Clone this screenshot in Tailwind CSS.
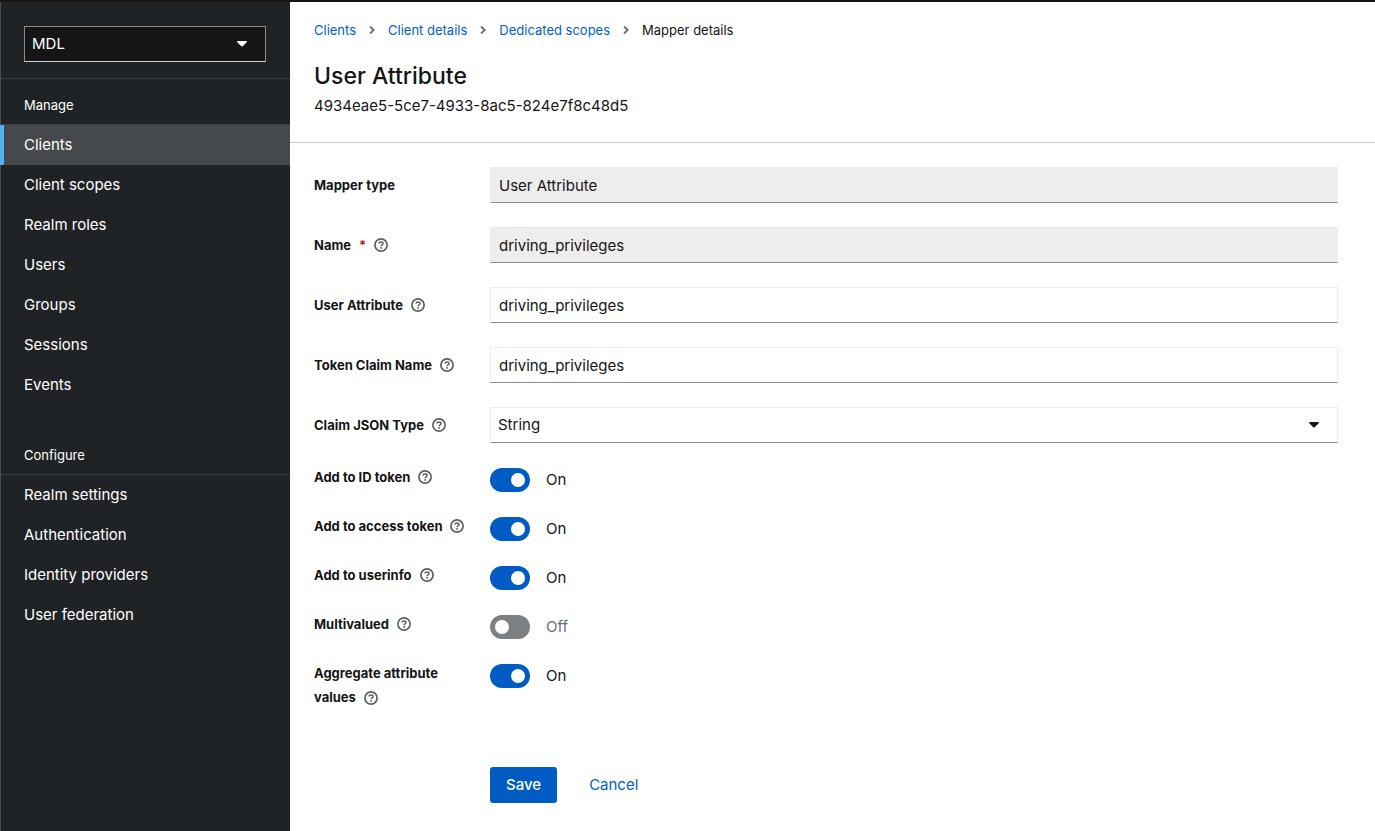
<!DOCTYPE html>
<html lang="en">
<head>
<meta charset="utf-8">
<meta name="viewport" content="width=device-width, initial-scale=1">
<title>Mapper details</title>
<script src="https://cdn.jsdelivr.net/npm/@tailwindcss/browser@4"></script>
</head>
<body class="min-h-screen bg-white font-['Inter',sans-serif] text-[15px] text-[#151515]">
<svg class="hidden" aria-hidden="true">
  <symbol id="help" viewBox="0 0 14 14">
    <circle cx="7" cy="7" r="6.1" fill="none" stroke="currentColor" stroke-width="1.7"/>
    <path d="M4.900 5.500C5.100 4.500 5.900 4 6.900 4c1.200 0 2.100.6 2.100 1.600C9 6.900 7.100 6.700 7.100 8.200" fill="none" stroke="currentColor" stroke-width="1.500"/>
    <circle cx="7.100" cy="9.900" r=".95" fill="currentColor"/>
  </symbol>
  <symbol id="caret" viewBox="0 0 10 6">
    <path d="M.8 0h8.400c.7 0 1 .8.500 1.300L5.700 5.200a1 1 0 0 1-1.400 0L.3 1.300C-.2.8.1 0 .8 0z" fill="currentColor"/>
  </symbol>
  <symbol id="chevron" viewBox="0 0 6 8">
    <path d="M1 .5 4.700 4 1 7.500" fill="none" stroke="currentColor" stroke-width="1.900"/>
  </symbol>
</svg>
<div class="flex min-h-screen border-t-2 border-[#151515]">
  <aside class="w-[290px] shrink-0 border-l border-[#4a4d4f] bg-[#1f2325] text-white">
    <div class="border-b border-[#3a3e40] pt-6 pr-6 pb-4 pl-[23px]">
      <button type="button" class="flex h-9 w-full items-center justify-between border border-[#8a8d90] border-b-[#d2d2d2] bg-[#151515] pr-[18px] pl-[7px] text-left">
        <span>MDL</span>
        <svg class="h-[6px] w-[10px]"><use href="#caret"/></svg>
      </button>
    </div>
    <nav aria-label="Global">
      <section>
        <h2 class="border-b border-[#3a3e40] pt-4 pb-[9px] pl-[23px] text-[13px] leading-5">Manage</h2>
        <ul class="leading-6">
          <li><a href="#" aria-current="page" class="-ml-px block border-l-4 border-[#53b1f4] bg-[#46494b] py-2 pl-5">Clients</a></li>
          <li><a href="#" class="block py-2 pl-[23px]">Client scopes</a></li>
          <li><a href="#" class="block py-2 pl-[23px]">Realm roles</a></li>
          <li><a href="#" class="block py-2 pl-[23px]">Users</a></li>
          <li><a href="#" class="block py-2 pl-[23px]">Groups</a></li>
          <li><a href="#" class="block py-2 pl-[23px]">Sessions</a></li>
          <li><a href="#" class="block py-2 pl-[23px]">Events</a></li>
        </ul>
      </section>
      <section class="mt-6">
        <h2 class="border-b border-[#3a3e40] pt-4 pb-[9px] pl-[23px] text-[13px] leading-5">Configure</h2>
        <ul class="leading-6">
          <li><a href="#" class="block py-2 pl-[23px]">Realm settings</a></li>
          <li><a href="#" class="block py-2 pl-[23px]">Authentication</a></li>
          <li><a href="#" class="block py-2 pl-[23px]">Identity providers</a></li>
          <li><a href="#" class="block py-2 pl-[23px]">User federation</a></li>
        </ul>
      </section>
    </nav>
  </aside>
  <main class="min-w-0 grow">
    <header class="border-b border-[#c7c7c7] px-6 pt-[18px] pb-6">
      <nav aria-label="Breadcrumb">
        <ol class="flex items-center gap-[13px] text-[13px] leading-5">
          <li><a href="#" class="text-[#005fc9]">Clients</a></li>
          <li aria-hidden="true"><svg class="h-2 w-[6px] text-[#6a6e73]"><use href="#chevron"/></svg></li>
          <li><a href="#" class="text-[#005fc9]">Client details</a></li>
          <li aria-hidden="true"><svg class="h-2 w-[6px] text-[#6a6e73]"><use href="#chevron"/></svg></li>
          <li><a href="#" class="text-[#005fc9]">Dedicated scopes</a></li>
          <li aria-hidden="true"><svg class="h-2 w-[6px] text-[#6a6e73]"><use href="#chevron"/></svg></li>
          <li aria-current="page">Mapper details</li>
        </ol>
      </nav>
      <h1 class="mt-5 mb-0.5 text-[23px] leading-8 font-medium">User Attribute</h1>
      <p class="leading-6">4934eae5-5ce7-4933-8ac5-824e7f8c48d5</p>
    </header>
    <form class="pt-6 pr-[37px] pb-7 pl-6">
      <div class="flex flex-col gap-6">
        <div class="grid grid-cols-[160px_1fr] gap-4">
          <div class="flex items-center gap-2 text-[13px] leading-6 font-bold"><label for="type">Mapper type</label></div>
          <input id="type" value="User Attribute" readonly class="h-9 w-full border border-[#ededed] border-b-[#8a8d90] bg-[#ededed] px-2">
        </div>
        <div class="grid grid-cols-[160px_1fr] gap-4">
          <div class="flex items-center gap-2 text-[13px] leading-6 font-bold"><label for="name">Name</label><span class="text-[#c9190b]">*</span><button type="button" aria-label="Help for Name" class="text-[#5c6066]"><svg class="size-[14px]"><use href="#help"/></svg></button></div>
          <input id="name" value="driving_privileges" readonly class="h-9 w-full border border-[#ededed] border-b-[#8a8d90] bg-[#ededed] px-2">
        </div>
        <div class="grid grid-cols-[160px_1fr] gap-4">
          <div class="flex items-center gap-2 text-[13px] leading-6 font-bold"><label for="attr">User Attribute</label><button type="button" aria-label="Help for User Attribute" class="text-[#5c6066]"><svg class="size-[14px]"><use href="#help"/></svg></button></div>
          <input id="attr" value="driving_privileges" class="h-9 w-full border border-[#ededed] border-b-[#8a8d90] px-2">
        </div>
        <div class="grid grid-cols-[160px_1fr] gap-4">
          <div class="flex items-center gap-2 text-[13px] leading-6 font-bold"><label for="claim">Token Claim Name</label><button type="button" aria-label="Help for Token Claim Name" class="text-[#5c6066]"><svg class="size-[14px]"><use href="#help"/></svg></button></div>
          <input id="claim" value="driving_privileges" class="h-9 w-full border border-[#ededed] border-b-[#8a8d90] px-2">
        </div>
        <div class="grid grid-cols-[160px_1fr] gap-4">
          <div class="flex items-center gap-2 text-[13px] leading-6 font-bold"><label for="json">Claim JSON Type</label><button type="button" aria-label="Help for Claim JSON Type" class="text-[#5c6066]"><svg class="size-[14px]"><use href="#help"/></svg></button></div>
          <div class="relative">
            <select id="json" class="block h-9 w-full appearance-none border border-[#ededed] border-b-[#8a8d90] px-[7px]"><option>String</option></select>
            <svg class="pointer-events-none absolute top-[15px] right-[19px] h-[6px] w-[10px]"><use href="#caret"/></svg>
          </div>
        </div>
      </div>
      <div class="mt-[22px] flex flex-col gap-[22px]">
        <div class="grid grid-cols-[160px_1fr] items-start gap-4">
          <div class="flex items-center gap-2 text-[13px] leading-6 font-bold"><label for="idt">Add to ID token</label><button type="button" aria-label="Help for Add to ID token" class="text-[#5c6066]"><svg class="size-[14px]"><use href="#help"/></svg></button></div>
          <div class="flex items-center gap-4 pt-[3px] leading-6"><input id="idt" type="checkbox" role="switch" checked class="h-6 w-10 appearance-none rounded-full bg-[#7d8083] p-[5px] before:block before:size-[14px] before:rounded-full before:bg-white checked:bg-[#005cc3] checked:before:translate-x-4"><span>On</span></div>
        </div>
        <div class="grid grid-cols-[160px_1fr] items-start gap-4">
          <div class="flex items-center gap-2 text-[13px] leading-6 font-bold"><label for="act">Add to access token</label><button type="button" aria-label="Help for Add to access token" class="text-[#5c6066]"><svg class="size-[14px]"><use href="#help"/></svg></button></div>
          <div class="flex items-center gap-4 pt-[3px] leading-6"><input id="act" type="checkbox" role="switch" checked class="h-6 w-10 appearance-none rounded-full bg-[#7d8083] p-[5px] before:block before:size-[14px] before:rounded-full before:bg-white checked:bg-[#005cc3] checked:before:translate-x-4"><span>On</span></div>
        </div>
        <div class="grid grid-cols-[160px_1fr] items-start gap-4">
          <div class="flex items-center gap-2 text-[13px] leading-6 font-bold"><label for="ui">Add to userinfo</label><button type="button" aria-label="Help for Add to userinfo" class="text-[#5c6066]"><svg class="size-[14px]"><use href="#help"/></svg></button></div>
          <div class="flex items-center gap-4 pt-[3px] leading-6"><input id="ui" type="checkbox" role="switch" checked class="h-6 w-10 appearance-none rounded-full bg-[#7d8083] p-[5px] before:block before:size-[14px] before:rounded-full before:bg-white checked:bg-[#005cc3] checked:before:translate-x-4"><span>On</span></div>
        </div>
        <div class="grid grid-cols-[160px_1fr] items-start gap-4">
          <div class="flex items-center gap-2 text-[13px] leading-6 font-bold"><label for="mv">Multivalued</label><button type="button" aria-label="Help for Multivalued" class="text-[#5c6066]"><svg class="size-[14px]"><use href="#help"/></svg></button></div>
          <div class="flex items-center gap-4 pt-[3px] leading-6"><input id="mv" type="checkbox" role="switch" class="h-6 w-10 appearance-none rounded-full bg-[#7d8083] p-[5px] before:block before:size-[14px] before:rounded-full before:bg-white checked:bg-[#005cc3] checked:before:translate-x-4"><span class="text-[#6a6e73]">Off</span></div>
        </div>
        <div class="grid grid-cols-[160px_1fr] items-start gap-4">
          <div class="text-[13px] leading-6 font-bold"><label for="agg">Aggregate attribute values</label><button type="button" aria-label="Help for Aggregate attribute values" class="ml-2 align-middle text-[#5c6066]"><svg class="size-[14px]"><use href="#help"/></svg></button></div>
          <div class="flex items-center gap-4 pt-[3px] leading-6"><input id="agg" type="checkbox" role="switch" checked class="h-6 w-10 appearance-none rounded-full bg-[#7d8083] p-[5px] before:block before:size-[14px] before:rounded-full before:bg-white checked:bg-[#005cc3] checked:before:translate-x-4"><span>On</span></div>
        </div>
      </div>
      <div class="mt-[58px] flex gap-4 pl-[176px]">
        <button type="submit" class="h-9 rounded-[3px] bg-[#005cc3] px-4 font-medium text-white">Save</button>
        <button type="button" class="h-9 px-4 text-[#005fc9]">Cancel</button>
      </div>
    </form>
  </main>
</div>
</body>
</html>
